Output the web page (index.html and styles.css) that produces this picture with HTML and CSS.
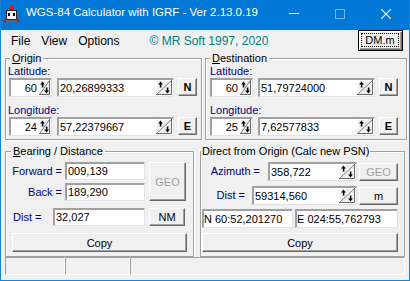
FILE: index.html
```html
<!DOCTYPE html>
<html>
<head>
<meta charset="utf-8">
<title>WGS-84 Calculator</title>
<link rel="stylesheet" href="styles.css">
</head>
<body>
<div class="window">
  <header class="titlebar">
    <svg class="app-icon" width="16" height="18" viewBox="0 0 16 18">
      <path d="M7 0h3v2h1v4H6V2h1z" fill="#e01818"/>
      <rect x="3.5" y="5.5" width="10" height="9" fill="#f4f4f4" stroke="#222"/>
      <rect x="5" y="8" width="2" height="3" fill="#000"/>
      <rect x="10" y="8" width="2" height="3" fill="#000"/>
      <path d="M0.5 17.5L3.5 11V17.5Z" fill="#d01010"/>
      <path d="M16.5 17.5L13.5 11V17.5Z" fill="#d01010"/>
      <rect x="3" y="15" width="11" height="2" fill="#666"/>
    </svg>
    <span class="title">WGS-84 Calculator with IGRF - Ver 2.13.0.19</span>
    <div class="caption">
      <span class="cbtn"><svg width="10" height="10" viewBox="0 0 10 10"><path d="M0 4.5H10" stroke="#fff"/></svg></span>
      <span class="cbtn cbtn-off"><svg width="10" height="10" viewBox="0 0 10 10"><rect x="0.5" y="0.5" width="9" height="9" fill="none" stroke="#fff"/></svg></span>
      <span class="cbtn"><svg width="10" height="10" viewBox="0 0 10 10"><path d="M0 0L10 10M10 0L0 10" stroke="#fff" stroke-width="1.1"/></svg></span>
    </div>
  </header>

  <main class="client">
    <div class="menurow">
      <nav class="menu"><span>File</span><span>View</span><span>Options</span></nav>
      <span class="copyright">© MR Soft 1997, 2020</span>
      <div class="btn btn-default"><span class="focus">DM.m</span></div>
    </div>

    <div class="groups groups-top">
      <fieldset class="gb gb-origin">
        <legend><u>O</u>rigin</legend>
        <div class="gbody gbody-origin">
          <div class="lbl">Latitude:</div>
          <div class="coord">
            <div class="field deg"><span class="val">60</span>
              <svg class="spin" width="11" height="15" viewBox="0 0 11 15"><rect width="11" height="15" fill="#f0f0f0"/><path d="M0.5 15V0.5H11" stroke="#fff" fill="none"/><path d="M10.5 0V14.5H0" stroke="#696969" fill="none"/><path d="M1 14L10 1" stroke="#808080"/><path d="M3.5 1.5L1.2 4.5H5.8Z"/><rect x="2.8" y="4" width="1.6" height="3.5"/><path d="M7.5 13.5L5.2 10.5H9.8Z"/><rect x="6.8" y="7.5" width="1.6" height="3.5"/></svg>
            </div>
            <div class="field min"><span class="val">20,26899333</span>
              <svg class="spin" width="16" height="15" viewBox="0 0 16 15"><rect width="16" height="15" fill="#f0f0f0"/><path d="M0.5 15V0.5H16" stroke="#fff" fill="none"/><path d="M15.5 0V14.5H0" stroke="#696969" fill="none"/><path d="M1 14L15 1" stroke="#808080"/><path d="M4.5 1.5L2.2 4.5H6.8Z"/><rect x="3.8" y="4" width="1.6" height="3.5"/><path d="M11.5 13.5L9.2 10.5H13.8Z"/><rect x="10.8" y="7.5" width="1.6" height="3.5"/></svg>
            </div>
            <div class="btn hemi">N</div>
          </div>
          <div class="lbl lbl-second">Longitude:</div>
          <div class="coord">
            <div class="field deg"><span class="val">24</span>
              <svg class="spin" width="11" height="15" viewBox="0 0 11 15"><rect width="11" height="15" fill="#f0f0f0"/><path d="M0.5 15V0.5H11" stroke="#fff" fill="none"/><path d="M10.5 0V14.5H0" stroke="#696969" fill="none"/><path d="M1 14L10 1" stroke="#808080"/><path d="M3.5 1.5L1.2 4.5H5.8Z"/><rect x="2.8" y="4" width="1.6" height="3.5"/><path d="M7.5 13.5L5.2 10.5H9.8Z"/><rect x="6.8" y="7.5" width="1.6" height="3.5"/></svg>
            </div>
            <div class="field min"><span class="val">57,22379667</span>
              <svg class="spin" width="16" height="15" viewBox="0 0 16 15"><rect width="16" height="15" fill="#f0f0f0"/><path d="M0.5 15V0.5H16" stroke="#fff" fill="none"/><path d="M15.5 0V14.5H0" stroke="#696969" fill="none"/><path d="M1 14L15 1" stroke="#808080"/><path d="M4.5 1.5L2.2 4.5H6.8Z"/><rect x="3.8" y="4" width="1.6" height="3.5"/><path d="M11.5 13.5L9.2 10.5H13.8Z"/><rect x="10.8" y="7.5" width="1.6" height="3.5"/></svg>
            </div>
            <div class="btn hemi">E</div>
          </div>
        </div>
      </fieldset>

      <fieldset class="gb gb-dest">
        <legend><u>D</u>estination</legend>
        <div class="gbody gbody-dest">
          <div class="lbl">Latitude:</div>
          <div class="coord">
            <div class="field deg"><span class="val">60</span>
              <svg class="spin" width="11" height="15" viewBox="0 0 11 15"><rect width="11" height="15" fill="#f0f0f0"/><path d="M0.5 15V0.5H11" stroke="#fff" fill="none"/><path d="M10.5 0V14.5H0" stroke="#696969" fill="none"/><path d="M1 14L10 1" stroke="#808080"/><path d="M3.5 1.5L1.2 4.5H5.8Z"/><rect x="2.8" y="4" width="1.6" height="3.5"/><path d="M7.5 13.5L5.2 10.5H9.8Z"/><rect x="6.8" y="7.5" width="1.6" height="3.5"/></svg>
            </div>
            <div class="field min"><span class="val">51,79724000</span>
              <svg class="spin" width="16" height="15" viewBox="0 0 16 15"><rect width="16" height="15" fill="#f0f0f0"/><path d="M0.5 15V0.5H16" stroke="#fff" fill="none"/><path d="M15.5 0V14.5H0" stroke="#696969" fill="none"/><path d="M1 14L15 1" stroke="#808080"/><path d="M4.5 1.5L2.2 4.5H6.8Z"/><rect x="3.8" y="4" width="1.6" height="3.5"/><path d="M11.5 13.5L9.2 10.5H13.8Z"/><rect x="10.8" y="7.5" width="1.6" height="3.5"/></svg>
            </div>
            <div class="btn hemi">N</div>
          </div>
          <div class="lbl lbl-second">Longitude:</div>
          <div class="coord">
            <div class="field deg"><span class="val">25</span>
              <svg class="spin" width="11" height="15" viewBox="0 0 11 15"><rect width="11" height="15" fill="#f0f0f0"/><path d="M0.5 15V0.5H11" stroke="#fff" fill="none"/><path d="M10.5 0V14.5H0" stroke="#696969" fill="none"/><path d="M1 14L10 1" stroke="#808080"/><path d="M3.5 1.5L1.2 4.5H5.8Z"/><rect x="2.8" y="4" width="1.6" height="3.5"/><path d="M7.5 13.5L5.2 10.5H9.8Z"/><rect x="6.8" y="7.5" width="1.6" height="3.5"/></svg>
            </div>
            <div class="field min"><span class="val">7,62577833</span>
              <svg class="spin" width="16" height="15" viewBox="0 0 16 15"><rect width="16" height="15" fill="#f0f0f0"/><path d="M0.5 15V0.5H16" stroke="#fff" fill="none"/><path d="M15.5 0V14.5H0" stroke="#696969" fill="none"/><path d="M1 14L15 1" stroke="#808080"/><path d="M4.5 1.5L2.2 4.5H6.8Z"/><rect x="3.8" y="4" width="1.6" height="3.5"/><path d="M11.5 13.5L9.2 10.5H13.8Z"/><rect x="10.8" y="7.5" width="1.6" height="3.5"/></svg>
            </div>
            <div class="btn hemi">E</div>
          </div>
        </div>
      </fieldset>
    </div>

    <div class="groups groups-bottom">
      <fieldset class="gb gb-bearing">
        <legend><u>B</u>earing / Distance</legend>
        <div class="gbody gbody-bearing">
          <div class="bd-grid">
            <span class="lbl lbl-right">Forward =</span>
            <div class="field plain"><span class="val">009,139</span></div>
            <div class="btn btn-off geo">GEO</div>
            <span class="lbl lbl-right">Back =</span>
            <div class="field plain"><span class="val">189,290</span></div>
          </div>
          <div class="dist-row">
            <span class="lbl dist-lbl">Dist =</span>
            <div class="field plain dist-field"><span class="val">32,027</span></div>
            <div class="btn unit-nm">NM</div>
          </div>
          <div class="btn copy copy-bearing">Copy</div>
        </div>
      </fieldset>

      <fieldset class="gb gb-direct">
        <legend>Direct from Origin (Calc new PSN)</legend>
        <div class="gbody gbody-direct">
          <div class="dr-row">
            <span class="lbl az-lbl">Azimuth =</span>
            <div class="field az-field"><span class="val">358,722</span>
              <svg class="spin" width="16" height="15" viewBox="0 0 16 15"><rect width="16" height="15" fill="#f0f0f0"/><path d="M0.5 15V0.5H16" stroke="#fff" fill="none"/><path d="M15.5 0V14.5H0" stroke="#696969" fill="none"/><path d="M1 14L15 1" stroke="#808080"/><path d="M4.5 1.5L2.2 4.5H6.8Z"/><rect x="3.8" y="4" width="1.6" height="3.5"/><path d="M11.5 13.5L9.2 10.5H13.8Z"/><rect x="10.8" y="7.5" width="1.6" height="3.5"/></svg>
            </div>
            <div class="btn btn-off side-btn">GEO</div>
          </div>
          <div class="dr-row dr-row2">
            <span class="lbl ddist-lbl">Dist =</span>
            <div class="field ddist-field"><span class="val">59314,560</span>
              <svg class="spin" width="16" height="15" viewBox="0 0 16 15"><rect width="16" height="15" fill="#f0f0f0"/><path d="M0.5 15V0.5H16" stroke="#fff" fill="none"/><path d="M15.5 0V14.5H0" stroke="#696969" fill="none"/><path d="M1 14L15 1" stroke="#808080"/><path d="M4.5 1.5L2.2 4.5H6.8Z"/><rect x="3.8" y="4" width="1.6" height="3.5"/><path d="M11.5 13.5L9.2 10.5H13.8Z"/><rect x="10.8" y="7.5" width="1.6" height="3.5"/></svg>
            </div>
            <div class="btn side-btn">m</div>
          </div>
          <div class="dr-row dr-row3">
            <div class="field res-n"><span class="val">N 60:52,201270</span></div>
            <div class="field res-e"><span class="val">E 024:55,762793</span></div>
          </div>
          <div class="btn copy copy-direct">Copy</div>
        </div>
      </fieldset>
    </div>

    <footer class="status">
      <div class="panel p1"></div>
      <div class="panel p2"></div>
      <div class="panel p3"></div>
    </footer>
  </main>
</div>
</body>
</html>
```
FILE: styles.css
```css
* { box-sizing: border-box; }
html, body { margin: 0; padding: 0; background: #fff; }
body {
  font-family: "Liberation Sans", Arial, sans-serif;
  font-size: 11px;
  color: #000;
}

.window {
  width: 410px;
  height: 281px;
  border: 1px solid #1883d7;
  border-top: 0;
  display: flex;
  flex-direction: column;
  background: #f0f0f0;
}

/* title bar */
.titlebar {
  height: 30px;
  flex: none;
  background: #0078d7;
  color: #fff;
  display: flex;
  align-items: flex-start;
}
.app-icon { margin: 5px 0 0 2px; flex: none; }
.title {
  margin: 4px 0 0 7px;
  font-size: 11.5px;
  line-height: 16px;
  white-space: nowrap;
}
.caption { margin-left: auto; display: flex; }
.cbtn {
  width: 46px;
  height: 30px;
  display: flex;
  justify-content: center;
  align-items: flex-start;
  padding-top: 9px;
}
.cbtn-off svg { opacity: 0.45; }

/* client */
.client {
  flex: 1;
  display: flex;
  flex-direction: column;
  background: #f0f0f0;
}

.menurow {
  height: 22px;
  display: flex;
  align-items: flex-start;
  flex: none;
}
.menu {
  display: flex;
  gap: 11px;
  padding-left: 10px;
  margin-top: 4px;
  font-size: 12px;
  line-height: 14px;
}
.copyright {
  margin: 4px 0 0 30px;
  font-size: 12px;
  line-height: 14px;
  color: #008080;
  white-space: nowrap;
}

/* buttons */
.btn {
  display: flex;
  align-items: center;
  justify-content: center;
  background: #f0f0f0;
  border: 1px solid;
  border-color: #fff #696969 #696969 #fff;
  box-shadow: inset -1px -1px 0 #a0a0a0;
  white-space: nowrap;
}
.btn-off { color: #a0a0a0; }
.btn-default {
  margin-left: auto;
  margin-right: 6px;
  width: 45px;
  height: 21px;
  border: 1px solid #000;
  box-shadow: inset 1px 1px 0 #fff, inset -1px -1px 0 #696969, inset -2px -2px 0 #a0a0a0;
  padding: 2px 3px 3px 2px;
}
.focus {
  flex: 1;
  align-self: stretch;
  display: flex;
  align-items: center;
  justify-content: center;
  border: 1px dotted #000;
}

/* group boxes */
.groups { display: flex; padding-left: 4px; flex: none; }
.groups-top { gap: 3px; }
.groups-bottom { gap: 6px; margin-top: 5px; }

.gb {
  margin: 0;
  padding: 0;
  min-width: 0;
  border: 1px solid #a0a0a0;
  box-shadow: inset 1px 1px 0 #fff, 1px 1px 0 #fff;
}
.gb legend {
  padding: 0 2px;
  margin-left: 4px;
  line-height: 13px;
  background: #f0f0f0;
}
.gb-origin { width: 197px; height: 88px; }
.gb-dest { width: 202px; height: 88px; }
.gb-bearing { width: 189px; height: 112px; }
.gb-bearing legend { margin-left: 5px; }
.gb-direct { width: 205px; height: 112px; }
.gb-direct legend { margin-left: 0; padding: 0 1px; }

.lbl { color: #000080; line-height: 13px; white-space: nowrap; }
.lbl-second { margin-top: 7px; }

.gbody-origin { padding-left: 2px; }
.gbody-origin .coord { margin-left: 1px; }
.gbody-dest { padding-left: 4px; }

.coord { display: flex; align-items: flex-start; height: 19px; }

/* edit fields */
.field {
  display: flex;
  align-items: center;
  height: 19px;
  background: #fff;
  border: 1px solid;
  border-color: #a0a0a0 #e3e3e3 #e3e3e3 #a0a0a0;
  box-shadow: inset 1px 1px 0 #a0a0a0;
}
.val { flex: 1; padding-left: 2px; white-space: nowrap; overflow: hidden; }
.spin { flex: none; margin-right: 1px; }
.deg { width: 43px; }
.deg .val { text-align: right; padding-right: 2px; }
.min { width: 117px; margin-left: 5px; }
.hemi { width: 19px; height: 18px; margin-left: 4px; font-weight: bold; }

/* bearing */
.gbody-bearing { padding: 4px 0 0 6px; }
.bd-grid {
  display: grid;
  grid-template-columns: 50px 80px 38px;
  grid-template-rows: 18px 18px;
  column-gap: 3px;
  row-gap: 3px;
}
.lbl-right { text-align: right; align-self: center; }
.bd-grid .field { height: 18px; }
.geo { grid-column: 3; grid-row: 1 / span 2; margin-left: 1px; height: 39px; }
.dist-row { display: flex; align-items: center; height: 18px; margin-top: 7px; }
.dist-lbl { width: 40px; margin-left: 1px; }
.dist-field { width: 92px; height: 18px; }
.unit-nm { width: 36px; height: 18px; margin-left: 4px; }
.copy { height: 19px; margin-top: 7px; }
.copy-bearing { width: 175px; }

/* direct */
.gbody-direct { padding: 4px 6px 0 0; }
.dr-row { display: flex; justify-content: flex-end; align-items: center; height: 19px; }
.dr-row2 { margin-top: 5px; }
.dr-row3 { margin-top: 4px; gap: 2px; }
.az-lbl { margin-right: 8px; }
.ddist-lbl { margin-right: 7px; }
.az-field { width: 89px; }
.ddist-field { width: 105px; }
.side-btn { width: 39px; height: 18px; margin-left: 2px; }
.res-n { width: 91px; }
.res-e { width: 103px; }
.res-n .val, .res-e .val { padding-left: 1px; }
.copy-direct { width: 196px; margin-left: auto; margin-top: 5px; }

/* status bar */
.status { display: flex; height: 18px; padding-left: 4px; flex: none; }
.panel {
  height: 18px;
  border: 1px solid;
  border-color: #a0a0a0 #fff #fff #a0a0a0;
}
.p1 { width: 60px; }
.p2 { width: 65px; }
.p3 { width: 275px; }
```
